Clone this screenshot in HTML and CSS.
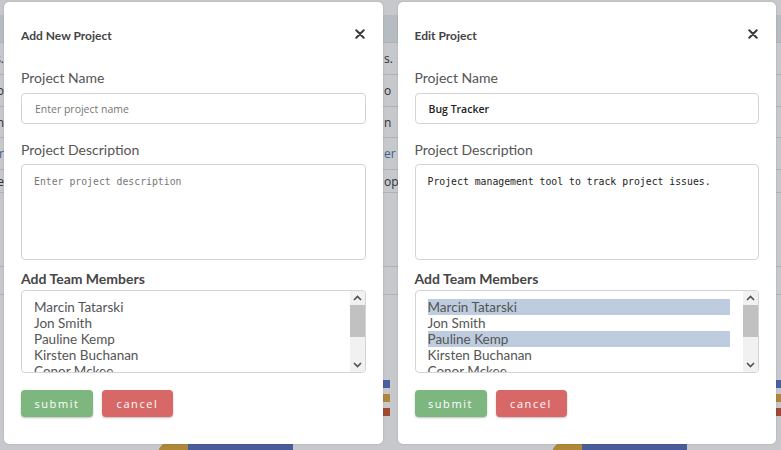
FILE: index.html
```html
<!DOCTYPE html>
<html lang="en">
<head>
<meta charset="utf-8">
<title>Projects</title>
<link rel="stylesheet" href="styles.css">
</head>
<body>
<div class="page">
  <div class="bg">
    <div class="bg-top"></div>
    <div class="bg-row bg-head"><span class="edge"></span><span></span><span class="mid"></span></div>
    <div class="bg-row r32"><span class="edge">s.</span><span></span><span class="mid">s.</span></div>
    <div class="bg-row r32"><span class="edge">o</span><span></span><span class="mid">o</span></div>
    <div class="bg-row r31"><span class="edge">n</span><span></span><span class="mid">n</span></div>
    <div class="bg-row r32"><span class="edge blue">er</span><span></span><span class="mid blue">er</span></div>
    <div class="bg-row r23"><span class="edge">e</span><span></span><span class="mid">ope</span></div>
    <div class="bg-row r74"><span class="edge"></span><span></span><span class="mid"></span></div>
    <div class="bg-row r28"><span class="edge"></span><span></span><span class="mid"></span></div>
    <div class="bg-legend">
      <span></span><span></span>
      <div class="legend"><i class="sq sq-blue"></i><i class="sq sq-gold"></i><i class="sq sq-red"></i></div>
      <div class="legend"><i class="sq sq-blue"></i><i class="sq sq-gold"></i><i class="sq sq-red"></i></div>
    </div>
    <div class="bg-chart">
      <span class="c-gold"></span><span class="c-blue"></span>
      <span class="c-gap"></span>
      <span class="c-gold"></span><span class="c-blue"></span>
    </div>
  </div>

  <div class="overlay">
    <section class="modal">
      <header class="modal-header">
        <h2 class="modal-title">Add New Project</h2>
        <button class="close" aria-label="Close"><svg width="10" height="10" viewBox="0 0 10 10"><path d="M1.3 1.3 L8.7 8.7 M8.7 1.3 L1.3 8.7" stroke="#3a3a3a" stroke-width="2" stroke-linecap="round"/></svg></button>
      </header>
      <label class="label">Project Name</label>
      <input class="input" type="text" placeholder="Enter project name">
      <label class="label label-gap">Project Description</label>
      <textarea class="textarea" placeholder="Enter project description"></textarea>
      <label class="label label-bold">Add Team Members</label>
      <div class="listbox">
        <ul class="options">
          <li>Marcin Tatarski</li>
          <li>Jon Smith</li>
          <li>Pauline Kemp</li>
          <li>Kirsten Buchanan</li>
          <li>Conor Mckee</li>
        </ul>
        <div class="scrollbar">
          <div class="sb-btn"><svg width="9" height="6" viewBox="0 0 9 6"><path d="M1 5 L4.5 1.5 L8 5" fill="none" stroke="#505050" stroke-width="1.6"/></svg></div>
          <div class="sb-thumb"></div>
          <div class="sb-track"></div>
          <div class="sb-btn"><svg width="9" height="6" viewBox="0 0 9 6"><path d="M1 1 L4.5 4.5 L8 1" fill="none" stroke="#505050" stroke-width="1.6"/></svg></div>
        </div>
      </div>
      <div class="actions">
        <button class="btn btn-submit">submit</button>
        <button class="btn btn-cancel">cancel</button>
      </div>
    </section>

    <section class="modal">
      <header class="modal-header">
        <h2 class="modal-title">Edit Project</h2>
        <button class="close" aria-label="Close"><svg width="10" height="10" viewBox="0 0 10 10"><path d="M1.3 1.3 L8.7 8.7 M8.7 1.3 L1.3 8.7" stroke="#3a3a3a" stroke-width="2" stroke-linecap="round"/></svg></button>
      </header>
      <label class="label">Project Name</label>
      <input class="input filled" type="text" value="Bug Tracker">
      <label class="label label-gap">Project Description</label>
      <textarea class="textarea filled">Project management tool to track project issues.</textarea>
      <label class="label label-bold">Add Team Members</label>
      <div class="listbox">
        <ul class="options">
          <li class="selected">Marcin Tatarski</li>
          <li>Jon Smith</li>
          <li class="selected">Pauline Kemp</li>
          <li>Kirsten Buchanan</li>
          <li>Conor Mckee</li>
        </ul>
        <div class="scrollbar">
          <div class="sb-btn"><svg width="9" height="6" viewBox="0 0 9 6"><path d="M1 5 L4.5 1.5 L8 5" fill="none" stroke="#505050" stroke-width="1.6"/></svg></div>
          <div class="sb-thumb"></div>
          <div class="sb-track"></div>
          <div class="sb-btn"><svg width="9" height="6" viewBox="0 0 9 6"><path d="M1 1 L4.5 4.5 L8 1" fill="none" stroke="#505050" stroke-width="1.6"/></svg></div>
        </div>
      </div>
      <div class="actions">
        <button class="btn btn-submit">submit</button>
        <button class="btn btn-cancel">cancel</button>
      </div>
    </section>
  </div>
</div>
</body>
</html>
```

FILE: styles.css
```css
* { box-sizing: border-box; }
html, body { margin: 0; padding: 0; }
body { background: #c7c8cb; font-family: "Lato", "Open Sans", sans-serif; }

.page { position: relative; width: 781px; height: 450px; overflow: hidden; background: #c7c8cb; }

/* dimmed page behind the modals */
.bg { display: flex; flex-direction: column; height: 450px; }
.bg-top { height: 15px; flex: none; }
.bg-row {
  display: grid;
  grid-template-columns: 4px 379px 30px 1fr;
  align-items: center;
  border-bottom: 1px solid #a9b3be;
  font: 12px "Open Sans", sans-serif;
  color: #2e3236;
  flex: none;
}
.bg-head { height: 28px; background: #b7bcc2; }
.r32 { height: 32px; }
.r31 { height: 31px; }
.r23 { height: 23px; }
.r74 { height: 74px; }
.r28 { height: 28px; }
.edge { display: flex; justify-content: flex-end; overflow: hidden; white-space: nowrap; }
.mid { padding-left: 1px; white-space: nowrap; overflow: hidden; }
.blue { color: #3a5f8c; }
.bg-legend {
  display: grid;
  grid-template-columns: 4px 379px 393px 1fr;
  margin-top: 85px;
  flex: none;
}
.bg-legend > span { display: block; }
.legend { display: flex; flex-direction: column; gap: 6px; }
.sq { display: block; width: 7px; height: 8px; }
.sq-blue { background: #4a5f9e; }
.sq-gold { background: #b0873a; }
.sq-red { background: #a14a33; }
.bg-chart { display: flex; margin-top: 26px; padding-left: 158px; height: 12px; flex: none; }
.c-gold { width: 30px; background: #ad8838; border-radius: 12px 0 0 0; }
.c-blue { width: 105px; background: #4b5c9b; }
.c-gap { width: 259px; }

/* modals */
.overlay {
  position: absolute;
  inset: 0;
  display: flex;
  gap: 15px;
  padding: 2px 5px 6px 4px;
}
.modal {
  flex: 1;
  background: #fff;
  border-radius: 5px;
  padding: 0 17px 27px;
  display: flex;
  flex-direction: column;
  box-shadow: 0 0 2px rgba(0,0,0,0.18);
}
.modal-header {
  height: 67px;
  display: flex;
  align-items: center;
  justify-content: space-between;
  flex: none;
}
.modal-title { margin: 0; font: 700 12px/16px "Lato", sans-serif; color: #444; }
.close { border: 0; background: none; padding: 0; margin: 0 1px 3px 0; width: 10px; height: 10px; display: flex; }

.label { display: block; font: 14px/17px "Lato", sans-serif; color: #555; margin-bottom: 7px; }
.label-gap { margin-top: 17px; margin-bottom: 6px; }
.label-bold { font-weight: 700; color: #464646; margin-top: 10px; margin-bottom: 3px; }

.input {
  display: block;
  width: 100%;
  height: 31px;
  border: 1px solid #d4d4d4;
  border-radius: 4px;
  padding: 0 13px;
  font: 10.5px "Open Sans", sans-serif;
  color: #222;
  outline: none;
}
.input::placeholder { color: #777; }
.input.filled { font-weight: 600; color: #222; }

.textarea {
  display: block;
  width: 100%;
  height: 96px;
  border: 1px solid #d4d4d4;
  border-radius: 4px;
  padding: 10px 12px;
  resize: none;
  font: 9.8px/13px "DejaVu Sans Mono", monospace;
  color: #222;
  outline: none;
}
.textarea::placeholder { color: #777; }

.listbox {
  display: grid;
  grid-template-columns: 1fr 15px;
  height: 83px;
  border: 1px solid #d4d4d4;
  border-radius: 4px;
  overflow: hidden;
  flex: none;
}
.options {
  list-style: none;
  margin: 0;
  padding: 8px 13px 0 12px;
  overflow: hidden;
  font: 13.5px/16px "Lato", sans-serif;
  color: #555;
}
.options li { height: 16px; white-space: nowrap; }
.options li.selected { background: #bdcddf; }

.scrollbar { display: flex; flex-direction: column; background: #f1f1f1; }
.sb-btn { height: 14px; display: flex; align-items: center; justify-content: center; flex: none; }
.sb-thumb { height: 32px; background: #c1c1c1; flex: none; }
.sb-track { flex: 1; }

.actions { display: flex; gap: 9px; margin-top: 17px; }
.btn {
  height: 27px;
  border: 0;
  border-radius: 4px;
  color: #fff;
  font: 11px "Open Sans", sans-serif;
  letter-spacing: 1.6px;
  box-shadow: 0 1px 2px rgba(0,0,0,0.25);
  padding: 0;
}
.btn-submit { width: 72px; background: #7db67f; }
.btn-cancel { width: 71px; background: #d86868; }
```
